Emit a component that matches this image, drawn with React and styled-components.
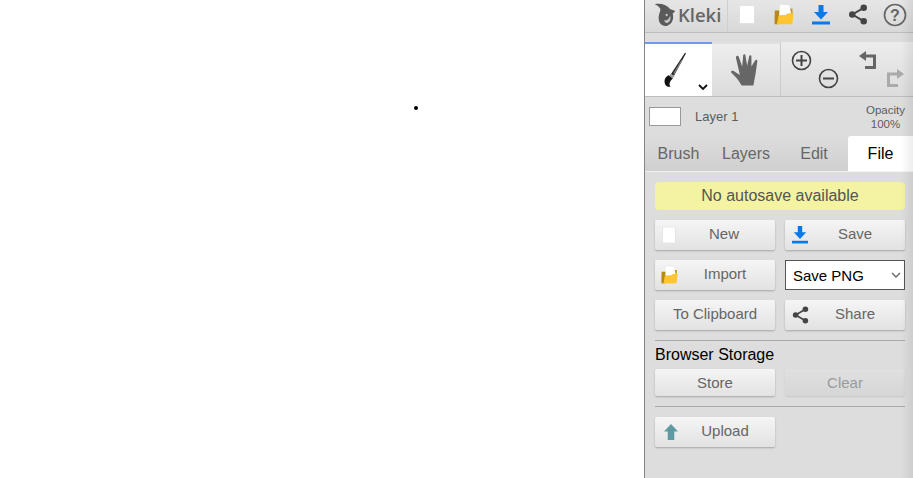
import React from 'react';
import styled, { createGlobalStyle } from 'styled-components';

const GlobalStyle = createGlobalStyle`
  html, body {
    margin: 0;
    padding: 0;
    height: 100%;
    overflow: hidden;
    background: #fff;
  }
  #root {
    height: 100%;
  }
  * {
    box-sizing: border-box;
  }
`;

const Page = styled.div`
  display: flex;
  width: 913px;
  height: 478px;
  font-family: 'Liberation Sans', Arial, sans-serif;
`;

const Canvas = styled.div`
  flex: 1;
  position: relative;
  background: #fff;
`;

const Dot = styled.div`
  position: absolute;
  left: 414px;
  top: 106px;
  width: 4px;
  height: 4px;
  border-radius: 50%;
  background: #000;
`;

const Panel = styled.div`
  position: relative;
  width: 269px;
  height: 478px;
  background: #dddddd;
  border-left: 1px solid #858585;
  display: flex;
  flex-direction: column;
  &::after {
    content: '';
    position: absolute;
    top: 0;
    right: 0;
    bottom: 0;
    width: 12px;
    background: linear-gradient(to right, rgba(0, 0, 0, 0), rgba(0, 0, 0, 0.07));
    pointer-events: none;
  }
`;

const TopBar = styled.div`
  display: flex;
  height: 33px;
  border-bottom: 1px solid #bdbdbd;
  background: linear-gradient(to bottom, #e6e6e6, #d8d8d8);
`;

const Logo = styled.div`
  width: 83px;
  display: flex;
  align-items: center;
  padding: 0 0 3px 9px;
  gap: 2px;
  border-right: 1px solid #cfcfcf;
  color: #666;
  font-family: 'Open Sans', sans-serif;
  font-size: 18.5px;
  font-weight: 600;
`;

const TopIcons = styled.div`
  flex: 1;
  display: flex;
  align-items: flex-start;
`;

const TopIcon = styled.div`
  width: 37px;
  height: 29px;
  display: flex;
  align-items: center;
  justify-content: center;
`;

const Spacer = styled.div`
  height: 9px;
  flex: none;
`;

const ToolBar = styled.div`
  display: flex;
  height: 55px;
  border-bottom: 1px solid #bdbdbd;
`;

const ToolTab = styled.div`
  position: relative;
  width: ${(p) => p.$width}px;
  display: flex;
  align-items: center;
  justify-content: center;
  background: ${(p) => (p.$active ? '#fff' : 'linear-gradient(to bottom, #eeeeee, #dcdcdc)')};
  border-top: 2px solid ${(p) => (p.$active ? '#6d9be8' : '#e2e2e2')};
`;

const Chevron = styled.svg`
  position: absolute;
  right: 4px;
  bottom: 5px;
`;

const BrushSvg = styled.svg`
  margin-right: 7px;
`;

const HandSvg = styled.svg`
  margin-right: 4px;
`;

const ToolGroup = styled.div`
  flex: ${(p) => (p.$grow ? 1 : 'none')};
  width: ${(p) => (p.$grow ? 'auto' : '68px')};
  background: linear-gradient(to bottom, #ececec, #dcdcdc);
  border-left: ${(p) => (p.$divided ? '1px solid #cbcbcb' : 'none')};
  display: grid;
  grid-template-columns: 27px 27px;
  grid-template-rows: 18px 18px;
  padding: 9px 0 0 ${(p) => (p.$divided ? 7 : 6)}px;
`;

const GroupCell = styled.div`
  display: flex;
  align-items: center;
  justify-content: center;
  grid-column: ${(p) => p.$col};
  grid-row: ${(p) => p.$row};
`;

const LayerRow = styled.div`
  display: flex;
  align-items: center;
  height: 39px;
  padding: 0 8px 0 4px;
  color: #5c5c5c;
`;

const LayerSwatch = styled.div`
  width: 32px;
  height: 19px;
  background: #fff;
  border: 1px solid #999;
`;

const LayerName = styled.div`
  flex: 1;
  padding-left: 14px;
  font-size: 13px;
`;

const Opacity = styled.div`
  font-size: 11.5px;
  line-height: 14px;
  text-align: center;
`;

const Tabs = styled.div`
  display: flex;
  height: 36px;
  background: linear-gradient(to bottom, #dddddd, #cfcfcf);
  border-bottom: 1px solid #f2f2f2;
`;

const Tab = styled.div`
  width: ${(p) => p.$width}px;
  display: flex;
  align-items: center;
  justify-content: center;
  font-size: 16px;
  color: ${(p) => (p.$active ? '#000' : '#666')};
  background: ${(p) => (p.$active ? '#fff' : 'transparent')};
  border-radius: ${(p) => (p.$active ? '3px 0 0 0' : '0')};
`;

const Content = styled.div`
  flex: 1;
  padding: 10px 8px 0 10px;
  display: flex;
  flex-direction: column;
`;

const Notice = styled.div`
  height: 28px;
  border-radius: 4px;
  background: #f3f3a2;
  color: #555;
  font-size: 16px;
  display: flex;
  align-items: center;
  justify-content: center;
`;

const ButtonGrid = styled.div`
  display: grid;
  grid-template-columns: 120px 120px;
  column-gap: 10px;
  row-gap: 10px;
  margin-top: ${(p) => p.$top || 0}px;
`;

const Button = styled.div`
  position: relative;
  height: ${(p) => p.$height || 30}px;
  display: flex;
  align-items: center;
  justify-content: center;
  font-size: 15px;
  color: ${(p) => (p.$disabled ? '#9a9a9a' : '#666')};
  background: ${(p) =>
    p.$disabled ? 'linear-gradient(to bottom, #e0e0e0, #d6d6d6)' : 'linear-gradient(to bottom, #f5f5f5, #e2e2e2)'};
  border-radius: 2px;
  box-shadow: 0 1px 2px rgba(0, 0, 0, ${(p) => (p.$disabled ? 0.1 : 0.25)});
  padding-bottom: ${(p) => (p.$height ? 0 : 4)}px;
`;

const ButtonIcon = styled.span`
  position: absolute;
  left: ${(p) => p.$left || 7}px;
  top: 50%;
  transform: translateY(-50%);
  display: flex;
`;

const ButtonLabel = styled.span`
  padding-left: ${(p) => p.$shift || 0}px;
`;

const SelectWrap = styled.div`
  position: relative;
  width: 120px;
  height: 30px;
`;

const Select = styled.select`
  appearance: none;
  display: block;
  height: 30px;
  width: 120px;
  padding: 0 0 0 7px;
  font-family: 'Liberation Sans', Arial, sans-serif;
  font-size: 15px;
  color: #000;
  background: #fff;
  border: 1px solid #555;
  border-radius: 0;
`;

const SelectArrow = styled.svg`
  position: absolute;
  right: 4px;
  top: 12px;
  pointer-events: none;
`;

const Rule = styled.div`
  height: 1px;
  background: #aaaaaa;
  margin-top: ${(p) => p.$top}px;
`;

const Heading = styled.div`
  font-size: 16px;
  line-height: 18px;
  color: #000;
  margin: 5px 0 5px;
`;

const SheetIcon = ({ width = 16, height = 19 }) => (
  <svg width={width} height={height} viewBox="0 0 16 19" preserveAspectRatio="none">
    <rect x="0.5" y="0.5" width="15" height="18" fill="#fff" stroke="#e2e2e2" />
  </svg>
);

const FolderIcon = ({ width = 20, height = 21 }) => (
  <svg width={width} height={height} viewBox="14 10 60 64">
    <path d="M60 24 H70 V44 H60 Z" fill="#c79a1e" />
    <path d="M16 30 H30 L28 72 H18 C16 72 15 70 15 68 Z" fill="#b88a14" />
    <path d="M32 12 L60 14 L66 40 L30 44 Z" fill="#fff" />
    <path d="M22 72 C26 58 26 48 28 44 L50 44 L56 38 H73 L70 66 C70 70 66 72 62 72 Z" fill="#fdc52f" />
  </svg>
);

const SaveIcon = ({ width = 18, height = 20 }) => (
  <svg width={width} height={height} viewBox="0 0 18 20">
    <path d="M6.5 0 h5 v7 h4.5 l-7 7.5 l-7 -7.5 h4.5 z" fill="#0a7ae6" />
    <rect x="0" y="16.5" width="18" height="3" fill="#0a7ae6" />
  </svg>
);

const ShareIcon = ({ width = 20, height = 21 }) => (
  <svg width={width} height={height} viewBox="0 0 20 22">
    <path d="M16 4 L4 11 L16 18" fill="none" stroke="#444" strokeWidth="2" />
    <circle cx="16" cy="4" r="3.4" fill="#444" />
    <circle cx="4" cy="11" r="3.4" fill="#444" />
    <circle cx="16" cy="18" r="3.4" fill="#444" />
  </svg>
);

const HelpIcon = () => (
  <svg width="24" height="24" viewBox="0 0 24 24">
    <circle cx="12" cy="12" r="10.5" fill="none" stroke="#666" strokeWidth="1.7" />
    <text x="12" y="17.5" textAnchor="middle" fontSize="16" fontWeight="bold" fontFamily="Liberation Sans" fill="#666">?</text>
  </svg>
);

const LogoIcon = () => (
  <svg width="22" height="24" viewBox="12 4 66 72">
    <path
      d="M14 8 C30 4 48 8 60 22 L76 28 L68 36 C72 50 68 66 52 72 C38 76 26 66 26 50 C26 36 34 26 30 20 C26 14 20 10 14 8 Z"
      fill="#5a5a5a"
    />
    <path d="M42 56 C50 58 58 52 60 42 C64 50 60 62 50 64 C46 64 44 60 42 56 Z" fill="#c8c8c8" />
    <circle cx="50" cy="40" r="3.5" fill="#c8c8c8" />
  </svg>
);

const BrushIcon = () => (
  <BrushSvg width="24" height="36" viewBox="25 20 72 108">
    <path d="M91 22 L94 24 L58 91 L49 86 Z" fill="#222" />
    <path d="M80 44 L83 46 L59 86 L56 84 Z" fill="#888" />
    <path d="M48 85 L59 92 L54 101 L43 93 Z" fill="#9a9a9a" />
    <path d="M42 90 C30 95 27 108 32 118 C36 124 42 125 48 124 C42 118 44 108 54 100 Z" fill="#111" />
  </BrushSvg>
);

const HandIcon = () => (
  <HandSvg width="29" height="34" viewBox="15 22 88 102">
    <path
      d="M50 120 C42 104 30 92 18 80 C17 76 22 74 26 76 L45 88 L33 36 C33 29 40 28 42 34 L52 62 L55 29 C56 23 62 24 62 30 L67 60 L73 32 C75 26 80 27 80 33 L80 62 L91 44 C94 40 99 42 98 46 L93 82 L86 120 Z"
      fill="#666"
    />
  </HandSvg>
);

const ZoomIcon = ({ plus }) => (
  <svg width="21" height="21" viewBox="0 0 21 21">
    <circle cx="10.5" cy="10.5" r="9" fill="none" stroke="#444" strokeWidth="1.6" />
    <path d={plus ? 'M5 10.5 H16 M10.5 5 V16' : 'M5 10.5 H16'} stroke="#444" strokeWidth="2" />
  </svg>
);

const UndoIcon = ({ flip, color }) => (
  <svg width="18" height="19" viewBox="0 0 18 19" style={flip ? { transform: 'scale(-1, 1)' } : undefined}>
    <path d="M0 5 L7 0 V3.6 H17 V18 H6 V15 H14 V6.4 H7 V10 Z" fill={color} />
  </svg>
);

const UploadIcon = () => (
  <svg width="14" height="16" viewBox="0 0 15 17">
    <path d="M7.5 0 L15 8 H11 V17 H4 V8 H0 Z" fill="#5f9aa3" />
  </svg>
);

const App = () => {
  return (
    <Page>
      <GlobalStyle />
      <Canvas>
        <Dot />
      </Canvas>
      <Panel>
        <TopBar>
          <Logo>
            <LogoIcon />
            <span>Kleki</span>
          </Logo>
          <TopIcons>
            <TopIcon><SheetIcon /></TopIcon>
            <TopIcon><FolderIcon /></TopIcon>
            <TopIcon><SaveIcon /></TopIcon>
            <TopIcon><ShareIcon /></TopIcon>
            <TopIcon><HelpIcon /></TopIcon>
          </TopIcons>
        </TopBar>
        <Spacer />
        <ToolBar>
          <ToolTab $active $width={67}>
            <BrushIcon />
            <Chevron width="10" height="7" viewBox="0 0 10 7">
              <path d="M1 1 L5 5 L9 1" fill="none" stroke="#111" strokeWidth="1.8" />
            </Chevron>
          </ToolTab>
          <ToolTab $width={68}>
            <HandIcon />
          </ToolTab>
          <ToolGroup $divided>
            <GroupCell $col={1} $row={1}><ZoomIcon plus /></GroupCell>
            <GroupCell $col={2} $row={2}><ZoomIcon /></GroupCell>
          </ToolGroup>
          <ToolGroup $grow>
            <GroupCell $col={1} $row={1}><UndoIcon color="#666" /></GroupCell>
            <GroupCell $col={2} $row={2}><UndoIcon flip color="#aaa" /></GroupCell>
          </ToolGroup>
        </ToolBar>
        <LayerRow>
          <LayerSwatch />
          <LayerName>Layer 1</LayerName>
          <Opacity>
            Opacity
            <br />
            100%
          </Opacity>
        </LayerRow>
        <Tabs>
          <Tab $width={67}>Brush</Tab>
          <Tab $width={68}>Layers</Tab>
          <Tab $width={68}>Edit</Tab>
          <Tab $active $width={65}>File</Tab>
        </Tabs>
        <Content>
          <Notice>No autosave available</Notice>
          <ButtonGrid $top={10}>
            <Button>
              <ButtonIcon><SheetIcon width={14} height={17} /></ButtonIcon>
              <ButtonLabel $shift={18}>New</ButtonLabel>
            </Button>
            <Button>
              <ButtonIcon><SaveIcon width={16} height={18} /></ButtonIcon>
              <ButtonLabel $shift={20}>Save</ButtonLabel>
            </Button>
            <Button>
              <ButtonIcon $left={6}><FolderIcon width={17} height={18} /></ButtonIcon>
              <ButtonLabel $shift={20}>Import</ButtonLabel>
            </Button>
            <SelectWrap>
              <Select defaultValue="png">
                <option value="png">Save PNG</option>
                <option value="psd">Save PSD</option>
              </Select>
              <SelectArrow width="10" height="6" viewBox="0 0 10 6">
                <path d="M1 1 L5 5 L9 1" fill="none" stroke="#666" strokeWidth="1.3" />
              </SelectArrow>
            </SelectWrap>
            <Button>
              <ButtonLabel>To Clipboard</ButtonLabel>
            </Button>
            <Button>
              <ButtonIcon><ShareIcon width={17} height={18} /></ButtonIcon>
              <ButtonLabel $shift={20}>Share</ButtonLabel>
            </Button>
          </ButtonGrid>
          <Rule $top={10} />
          <Heading>Browser Storage</Heading>
          <ButtonGrid>
            <Button $height={27}>Store</Button>
            <Button $height={27} $disabled>Clear</Button>
          </ButtonGrid>
          <Rule $top={10} />
          <ButtonGrid $top={10}>
            <Button>
              <ButtonIcon $left={9}><UploadIcon /></ButtonIcon>
              <ButtonLabel $shift={20}>Upload</ButtonLabel>
            </Button>
          </ButtonGrid>
        </Content>
      </Panel>
    </Page>
  );
};

export default App;
